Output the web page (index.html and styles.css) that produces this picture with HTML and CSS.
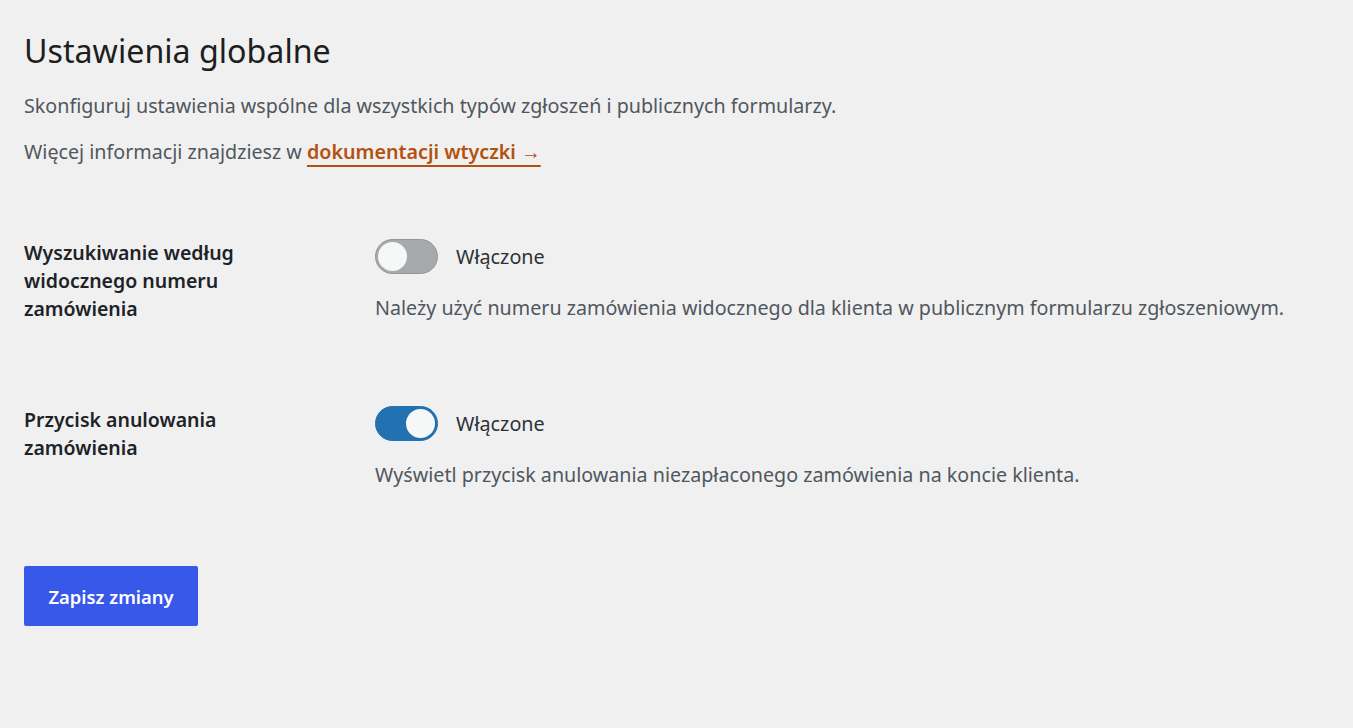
FILE: index.html
```html
<!DOCTYPE html>
<html lang="pl">
<head>
<meta charset="utf-8">
<title>Ustawienia globalne</title>
<link rel="stylesheet" href="styles.css">
</head>
<body>
<main class="page">
  <h1 class="title">Ustawienia globalne</h1>
  <p class="intro">Skonfiguruj ustawienia wspólne dla wszystkich typów zgłoszeń i publicznych formularzy.</p>
  <p class="intro">Więcej informacji znajdziesz w <a class="doc-link" href="#">dokumentacji wtyczki →</a></p>

  <div class="settings">
    <div class="row">
      <div class="label">Wyszukiwanie według widocznego numeru zamówienia</div>
      <div class="field">
        <label class="toggle-line">
          <span class="toggle"><span class="knob"></span></span>
          <span class="toggle-text">Włączone</span>
        </label>
        <p class="desc">Należy użyć numeru zamówienia widocznego dla klienta w publicznym formularzu zgłoszeniowym.</p>
      </div>
    </div>
    <div class="row">
      <div class="label">Przycisk anulowania zamówienia</div>
      <div class="field">
        <label class="toggle-line">
          <span class="toggle on"><span class="knob"></span></span>
          <span class="toggle-text">Włączone</span>
        </label>
        <p class="desc">Wyświetl przycisk anulowania niezapłaconego zamówienia na koncie klienta.</p>
      </div>
    </div>
  </div>

  <button class="save" type="button">Zapisz zmiany</button>
</main>
</body>
</html>
```
FILE: styles.css
```css
html, body {
  margin: 0;
  padding: 0;
  background: #f0f0f0;
}
body {
  font-family: "Noto Sans", "Open Sans", sans-serif;
  color: #1d2327;
}
.page {
  padding: 27px 24px 40px 24px;
}
.title {
  margin: 0;
  font-size: 32.2px;
  line-height: 48px;
  font-weight: 400;
  color: #1e1e1e;
}
.intro {
  margin: 15px 0 0 0;
  font-size: 19.7px;
  line-height: 31px;
  color: #50575e;
}
.intro + .intro {
  margin-top: 15px;
}
.doc-link {
  color: #b4510f;
  font-weight: 600;
  text-decoration: underline;
  text-decoration-thickness: 2px;
  text-underline-offset: 6px;
}
.settings {
  margin-top: 72px;
  display: flex;
  flex-direction: column;
  gap: 83px;
}
.row {
  display: grid;
  grid-template-columns: 351px 1fr;
}
.label {
  width: 250px;
  font-size: 19.5px;
  font-weight: 600;
  line-height: 28px;
  color: #1d2327;
}
.field {
  display: flex;
  flex-direction: column;
}
.toggle-line {
  display: flex;
  align-items: center;
  gap: 18px;
  height: 35px;
}
.toggle {
  box-sizing: border-box;
  width: 63px;
  height: 35px;
  border-radius: 18px;
  background: #a7aaad;
  border: 1px solid #93979b;
  padding: 2px;
  display: flex;
  align-items: center;
}
.toggle.on {
  background: #2271b1;
  border-color: #2271b1;
  justify-content: flex-end;
}
.knob {
  width: 29px;
  height: 29px;
  border-radius: 50%;
  background: #f6f7f7;
}
.toggle-text {
  font-size: 19.8px;
  color: #2c3338;
}
.desc {
  margin: 20px 0 0 0;
  font-size: 19.7px;
  line-height: 28px;
  color: #50575e;
}
.save {
  margin-top: 77px;
  width: 174px;
  height: 60px;
  border: none;
  border-radius: 2px;
  background: #3858e9;
  color: #ffffff;
  font-family: "Noto Sans", "Open Sans", sans-serif;
  font-size: 18.4px;
  font-weight: 600;
  cursor: pointer;
}
```
